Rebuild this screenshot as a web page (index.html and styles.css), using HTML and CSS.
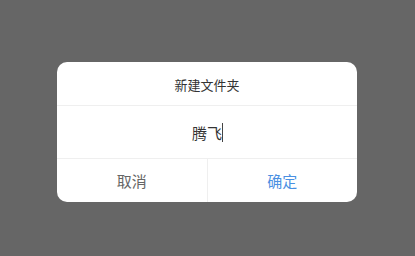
FILE: index.html
```html
<!DOCTYPE html>
<html lang="zh-CN">
<head>
<meta charset="utf-8">
<link rel="stylesheet" href="styles.css">
</head>
<body>
<div class="page">
  <div class="dialog">
    <div class="title">新建文件夹</div>
    <div class="field"><span class="value">腾飞</span><span class="caret"></span></div>
    <div class="actions">
      <div class="btn cancel">取消</div>
      <div class="btn ok">确定</div>
    </div>
  </div>
</div>
</body>
</html>
```
FILE: styles.css
```css
html, body {
  margin: 0;
  padding: 0;
  background: #666666;
}
.page {
  width: 415px;
  height: 256px;
  padding-top: 62px;
  padding-right: 1px;
  box-sizing: border-box;
  font-family: "Noto Sans CJK SC", "Noto Sans", sans-serif;
}
.dialog {
  width: 300px;
  height: 140px;
  margin: 0 auto;
  background: #ffffff;
  border-radius: 10px;
  display: flex;
  flex-direction: column;
  overflow: hidden;
}
.title {
  height: 44px;
  display: flex;
  align-items: center;
  justify-content: center;
  font-size: 13px;
  color: #333333;
  border-bottom: 1px solid #efefef;
  padding-top: 1px;
  box-sizing: border-box;
}
.field {
  height: 53px;
  display: flex;
  align-items: center;
  justify-content: center;
  font-size: 15px;
  color: #333333;
  border-bottom: 1px solid #efefef;
  box-sizing: border-box;
  padding-left: 1px;
}
.caret {
  display: inline-block;
  width: 1px;
  height: 19px;
  background: #444444;
}
.actions {
  flex: 1;
  display: flex;
}
.btn {
  flex: 1;
  display: flex;
  align-items: center;
  justify-content: center;
  font-size: 15px;
}
.cancel {
  color: #666666;
  border-right: 1px solid #efefef;
}
.ok {
  color: #4a90e2;
}
```
